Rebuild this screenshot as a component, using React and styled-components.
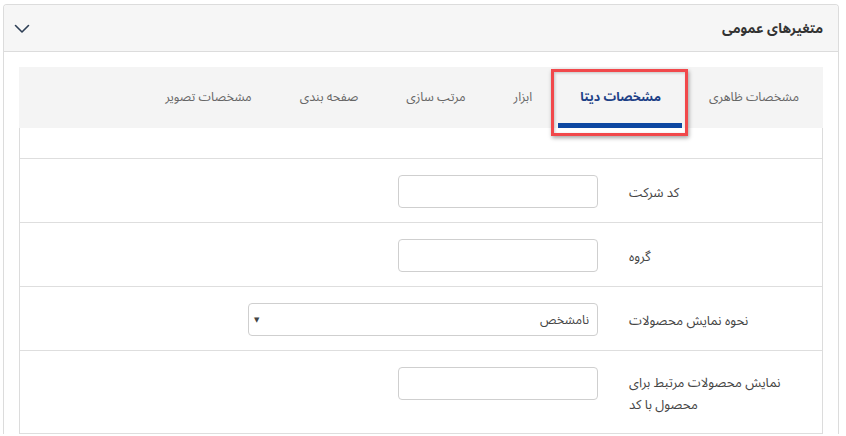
import React from "react";
import styled, { createGlobalStyle } from "styled-components";

const Global = createGlobalStyle`
  html, body { margin: 0; padding: 0; background: #fff; }
  body { font-family: "Noto Sans Arabic", "DejaVu Sans", "Noto Sans", sans-serif; font-size: 13px; color: #444; }
  * { box-sizing: border-box; }
`;

const Panel = styled.div`
  margin: 4px 7px 0 3px;
  border: 1px solid #dcdcdc;
  border-bottom: none;
  border-radius: 4px 4px 0 0;
  direction: rtl;
  overflow: hidden;
`;

const Header = styled.div`
  height: 47px;
  background: #f6f6f6;
  border-bottom: 1px solid #dcdcdc;
  display: flex;
  align-items: center;
  justify-content: space-between;
  padding: 0 15px 0 10px;
`;

const Title = styled.h3`
  margin: 0;
  font-size: 13.5px;
  font-weight: bold;
  color: #333;
`;

const Chevron = styled.svg`
  width: 16px;
  height: 10px;
  display: block;
  margin-top: 2px;
`;

const Body = styled.div`
  padding: 15px 15px 0;
`;

const TabBar = styled.div`
  display: flex;
  height: 61px;
  background: #f4f4f4;
`;

const Tab = styled.div`
  position: relative;
  display: flex;
  align-items: center;
  padding: 0 24px 2px;
  font-size: 12.5px;
  white-space: nowrap;
  color: ${(p) => (p.$active ? "#1d3f86" : "#666")};
  font-weight: ${(p) => (p.$active ? "bold" : "normal")};
  &::after {
    content: "";
    display: ${(p) => (p.$active ? "block" : "none")};
    position: absolute;
    left: 2px;
    right: 3px;
    bottom: 0;
    height: 5px;
    background: #0d47a1;
  }
`;

const Highlight = styled.span`
  position: absolute;
  top: 2px;
  bottom: -8px;
  left: -5px;
  right: -3px;
  border: 3px solid #f1484b;
  box-shadow: 1px 2px 4px rgba(0, 0, 0, 0.35), inset 1px 1px 3px rgba(0, 0, 0, 0.2);
  pointer-events: none;
  z-index: 2;
`;

const Table = styled.div`
  border-left: 1px solid #dcdcdc;
  border-right: 1px solid #dcdcdc;
`;

const Spacer = styled.div`
  height: 30px;
`;

const Row = styled.div`
  display: flex;
  min-height: 64px;
  border-top: 1px solid #dedede;
  &:last-child { border-bottom: 1px solid #dedede; }
`;

const Label = styled.div`
  width: 209px;
  flex: none;
  padding: 21px 16px 17px;
  display: flex;
  align-items: center;
  line-height: 22px;
  font-size: 13px;
  color: #444;
`;

const LabelText = styled.span`
  display: block;
  text-align: left;
  width: 100%;
`;

const Field = styled.div`
  flex: 1;
  padding: 16px 15px 0;
`;

const Input = styled.input`
  display: block;
  width: 200px;
  height: 33px;
  border: 1px solid #cfcfcf;
  border-radius: 4px;
  background: #fff;
  font: inherit;
  padding: 0 10px;
`;

const SelectWrap = styled.div`
  position: relative;
  width: 350px;
`;

const Select = styled.select`
  display: block;
  width: 100%;
  height: 33px;
  border: 1px solid #cfcfcf;
  border-radius: 4px;
  background: #fff;
  font: inherit;
  font-size: 12.5px;
  color: #444;
  padding: 0 8px;
  appearance: none;
  -webkit-appearance: none;
  direction: rtl;
`;

const Arrow = styled.span`
  position: absolute;
  left: 6px;
  top: 50%;
  transform: translateY(-50%);
  font-size: 7px;
  color: #444;
  pointer-events: none;
  font-family: "DejaVu Sans", sans-serif;
`;

const tabs = ["مشخصات ظاهری", "مشخصات دیتا", "ابزار", "مرتب سازی", "صفحه بندی", "مشخصات تصویر"];

export default function App() {
  return (
    <>
      <Global />
      <Panel>
        <Header>
          <Title>متغیرهای عمومی</Title>
          <Chevron viewBox="0 0 16 10" fill="none">
            <path d="M1.5 1.5 L8 8 L14.5 1.5" stroke="#2e3f55" strokeWidth="1.6" strokeLinecap="round" strokeLinejoin="round" />
          </Chevron>
        </Header>
        <Body>
          <TabBar>
            {tabs.map((t, i) => (
              <Tab key={t} $active={i === 1}>
                {t}
                {i === 1 && <Highlight />}
              </Tab>
            ))}
          </TabBar>
          <Table>
            <Spacer />
            <Row>
              <Label><LabelText>کد شرکت</LabelText></Label>
              <Field><Input /></Field>
            </Row>
            <Row>
              <Label><LabelText>گروه</LabelText></Label>
              <Field><Input /></Field>
            </Row>
            <Row>
              <Label><LabelText>نحوه نمایش محصولات</LabelText></Label>
              <Field>
                <SelectWrap>
                  <Select defaultValue="0">
                    <option value="0">نامشخص</option>
                  </Select>
                  <Arrow>▼</Arrow>
                </SelectWrap>
              </Field>
            </Row>
            <Row>
              <Label><LabelText>نمایش محصولات مرتبط برای محصول با کد</LabelText></Label>
              <Field><Input /></Field>
            </Row>
          </Table>
        </Body>
      </Panel>
    </>
  );
}
